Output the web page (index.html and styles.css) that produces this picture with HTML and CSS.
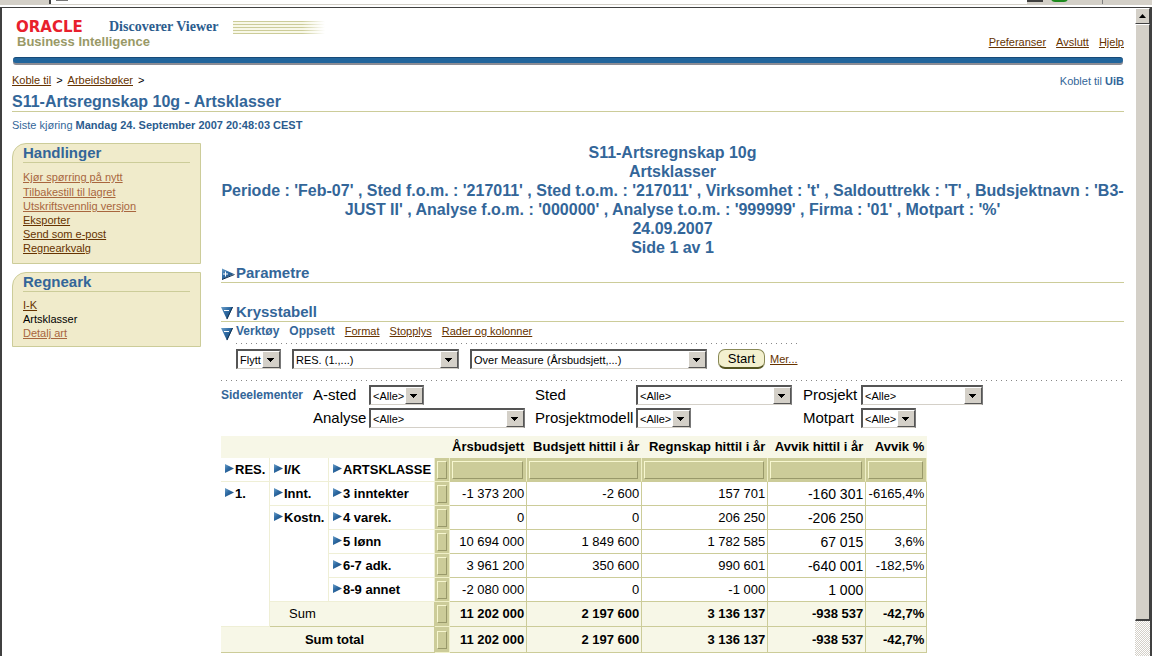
FILE: index.html
```html
<!DOCTYPE html>
<html lang="no">
<head>
<meta charset="utf-8">
<title>Oracle Discoverer Viewer</title>
<link rel="stylesheet" href="styles.css">
</head>
<body>
<svg class="sprite" aria-hidden="true">
  <defs>
    <linearGradient id="blue" x1="0" y1="0" x2="1" y2="1">
      <stop offset="0" stop-color="#6fa0c8"/><stop offset="0.4" stop-color="#2f6ca5"/><stop offset="1" stop-color="#17406c"/>
    </linearGradient>
  </defs>
  <symbol id="drill" viewBox="0 0 9 9"><path d="M0 0 9 4.5 0 9Z" fill="url(#blue)"/></symbol>
  <symbol id="closed" viewBox="0 0 14 12"><path d="M1 0.500 13 6 1 11.500Z" fill="url(#blue)"/><path d="M1 11.500 13.500 6.500" stroke="#12304f"/><path d="M2 6H7M4.500 3.500V8.500" stroke="#fff"/></symbol>
  <symbol id="open" viewBox="0 0 12 14"><path d="M0 1H12L6 13.500Z" fill="url(#blue)"/><path d="M11.500 1 6 13" stroke="#12304f"/><path d="M3 4.500H8" stroke="#fff"/></symbol>
</svg>

<div class="chrome" aria-hidden="true">
  <span class="chrome-tab"></span><span class="chrome-field"><i></i></span><span class="chrome-drop"></span><span class="chrome-go"></span><span class="chrome-end"></span>
</div>

<div class="window">
  <div class="page">
    <header class="masthead">
      <div>
        <div class="brand">
          <span class="logo">ORACLE</span>
          <span class="product">Discoverer Viewer</span>
          <span class="stripes"></span>
        </div>
        <div class="suite">Business Intelligence</div>
      </div>
      <nav class="global"><a href="#">Preferanser</a><a href="#">Avslutt</a><a href="#">Hjelp</a></nav>
    </header>
    <div class="bar"></div>

    <div class="path">
      <nav class="crumbs"><a href="#">Koble til</a><span>&gt;</span><a href="#">Arbeidsbøker</a><span>&gt;</span></nav>
      <div class="connected">Koblet til <b>UiB</b></div>
    </div>
    <h1>S11-Artsregnskap 10g - Artsklasser</h1>
    <p class="last-run">Siste kjøring <b>Mandag 24. September 2007 20:48:03 CEST</b></p>

    <div class="columns">
      <aside>
        <section class="box actions">
          <h2>Handlinger</h2>
          <ul>
            <li><a class="visited" href="#">Kjør spørring på nytt</a></li>
            <li><a class="visited" href="#">Tilbakestill til lagret</a></li>
            <li><a class="visited" href="#">Utskriftsvennlig versjon</a></li>
            <li><a href="#">Eksporter</a></li>
            <li><a href="#">Send som e-post</a></li>
            <li><a href="#">Regnearkvalg</a></li>
          </ul>
        </section>
        <section class="box">
          <h2>Regneark</h2>
          <ul>
            <li><a href="#">I-K</a></li>
            <li>Artsklasser</li>
            <li><a class="visited" href="#">Detalj art</a></li>
          </ul>
        </section>
      </aside>

      <main>
        <div class="report-title">
          <div>S11-Artsregnskap 10g</div>
          <div>Artsklasser</div>
          <div>Periode : 'Feb-07' , Sted f.o.m. : '217011' , Sted t.o.m. : '217011' , Virksomhet : 't' , Saldouttrekk : 'T' , Budsjektnavn : 'B3-JUST II' , Analyse f.o.m. : '000000' , Analyse t.o.m. : '999999' , Firma : '01' , Motpart : '%'</div>
          <div>24.09.2007</div>
          <div>Side 1 av 1</div>
        </div>

        <h2 class="section"><button class="toggle" aria-label="Vis parametre"><svg width="14" height="12"><use href="#closed"/></svg></button>Parametre</h2>
        <h2 class="section second"><button class="toggle" aria-label="Skjul krysstabell"><svg width="12" height="14"><use href="#open"/></svg></button>Krysstabell</h2>

        <div class="tools">
          <div class="tabs">
            <button class="toggle" aria-label="Skjul verktøy"><svg width="12" height="14"><use href="#open"/></svg></button>
            <b>Verktøy</b><b>Oppsett</b><a href="#">Format</a><a href="#">Stopplys</a><a href="#">Rader og kolonner</a>
          </div>
          <div class="layout-row">
            <span class="select w-move"><select aria-label="Handling"><option>Flytt</option></select></span>
            <span class="select w-item"><select aria-label="Element"><option>RES. (1.,...)</option></select></span>
            <span class="select w-target"><select aria-label="Plassering"><option>Over Measure (Årsbudsjett,...)</option></select></span>
            <button class="start">Start</button>
            <a class="more" href="#">Mer...</a>
          </div>
        </div>

        <div class="page-items">
          <b>Sideelementer</b>
          <label for="p1">A-sted</label><span class="select w-s"><select id="p1"><option>&lt;Alle&gt;</option></select></span>
          <label for="p2">Sted</label><span class="select w-l"><select id="p2"><option>&lt;Alle&gt;</option></select></span>
          <label for="p3">Prosjekt</label><span class="select w-m"><select id="p3"><option>&lt;Alle&gt;</option></select></span>
          <label class="row2" for="p4">Analyse</label><span class="select w-l"><select id="p4"><option>&lt;Alle&gt;</option></select></span>
          <label for="p5">Prosjektmodell</label><span class="select w-s"><select id="p5"><option>&lt;Alle&gt;</option></select></span>
          <label for="p6">Motpart</label><span class="select w-s"><select id="p6"><option>&lt;Alle&gt;</option></select></span>
        </div>

        <table class="crosstab">
          <colgroup><col class="c-res"><col class="c-ik"><col class="c-art"><col class="c-grip"><col class="c-n1"><col class="c-n2"><col class="c-n3"><col class="c-n4"><col class="c-n5"></colgroup>
          <thead>
            <tr class="heads"><td colspan="4"></td><th scope="col">Årsbudsjett</th><th scope="col">Budsjett hittil i år</th><th scope="col">Regnskap hittil i år</th><th scope="col">Avvik hittil i år</th><th scope="col">Avvik %</th></tr>
            <tr class="grips">
              <th class="dim"><button class="drill" aria-label="Drill RES."><svg width="9" height="9"><use href="#drill"/></svg></button>RES.</th>
              <th class="dim"><button class="drill" aria-label="Drill I/K"><svg width="9" height="9"><use href="#drill"/></svg></button>I/K</th>
              <th class="dim"><button class="drill" aria-label="Drill ARTSKLASSE"><svg width="9" height="9"><use href="#drill"/></svg></button>ARTSKLASSE</th>
              <td class="grip"><i></i></td><td class="grip wide"><i></i></td><td class="grip wide"><i></i></td><td class="grip wide"><i></i></td><td class="grip wide"><i></i></td><td class="grip wide"><i></i></td>
            </tr>
          </thead>
          <tbody>
            <tr>
              <th class="dim" rowspan="6"><button class="drill" aria-label="Drill 1."><svg width="9" height="9"><use href="#drill"/></svg></button>1.</th>
              <th class="dim"><button class="drill" aria-label="Drill Innt."><svg width="9" height="9"><use href="#drill"/></svg></button>Innt.</th>
              <th class="dim"><button class="drill" aria-label="Drill 3"><svg width="9" height="9"><use href="#drill"/></svg></button>3 inntekter</th>
              <td class="grip"><i></i></td><td>-1 373 200</td><td>-2 600</td><td>157 701</td><td class="big">-160 301</td><td>-6165,4%</td>
            </tr>
            <tr>
              <th class="dim" rowspan="4"><button class="drill" aria-label="Drill Kostn."><svg width="9" height="9"><use href="#drill"/></svg></button>Kostn.</th>
              <th class="dim"><button class="drill" aria-label="Drill 4"><svg width="9" height="9"><use href="#drill"/></svg></button>4 varek.</th>
              <td class="grip"><i></i></td><td>0</td><td>0</td><td>206 250</td><td class="big">-206 250</td><td></td>
            </tr>
            <tr>
              <th class="dim"><button class="drill" aria-label="Drill 5"><svg width="9" height="9"><use href="#drill"/></svg></button>5 lønn</th>
              <td class="grip"><i></i></td><td>10 694 000</td><td>1 849 600</td><td>1 782 585</td><td class="big">67 015</td><td>3,6%</td>
            </tr>
            <tr>
              <th class="dim"><button class="drill" aria-label="Drill 6-7"><svg width="9" height="9"><use href="#drill"/></svg></button>6-7 adk.</th>
              <td class="grip"><i></i></td><td>3 961 200</td><td>350 600</td><td>990 601</td><td class="big">-640 001</td><td>-182,5%</td>
            </tr>
            <tr>
              <th class="dim"><button class="drill" aria-label="Drill 8-9"><svg width="9" height="9"><use href="#drill"/></svg></button>8-9 annet</th>
              <td class="grip"><i></i></td><td>-2 080 000</td><td>0</td><td>-1 000</td><td class="big">1 000</td><td></td>
            </tr>
            <tr class="sum"><th class="sub" colspan="2">Sum</th><td class="grip"><i></i></td><td>11 202 000</td><td>2 197 600</td><td>3 136 137</td><td>-938 537</td><td>-42,7%</td></tr>
            <tr class="sum total"><th colspan="3">Sum total</th><td class="grip"><i></i></td><td>11 202 000</td><td>2 197 600</td><td>3 136 137</td><td>-938 537</td><td>-42,7%</td></tr>
          </tbody>
        </table>
      </main>
    </div>
  </div>
  <div class="scrollbar" aria-hidden="true"><span class="up"><svg width="7" height="4"><path d="M3.500 0 7 4H0Z"/></svg></span><span class="thumb"></span><span class="track"></span></div>
</div>
</body>
</html>
```
FILE: styles.css
```css
* { box-sizing: border-box; }
body {
  margin: 0;
  height: 100vh;
  overflow: hidden;
  display: flex;
  flex-direction: column;
  background: #fff;
  color: #000;
  font: 11px/14px "Liberation Sans", Arial, sans-serif;
}
.sprite { position: absolute; width: 0; height: 0; }
svg { display: block; }
a { color: #663300; }
a.visited { color: #a8663e; }
h1, h2, p, ul { margin: 0; padding: 0; }
ul { list-style: none; }
button { font: inherit; border: 0; padding: 0; background: none; }

/* browser toolbar edge */
.chrome { display: flex; height: 7px; border-bottom: 2px solid #fff; background: #d4d0c8; }
.chrome > span { height: 4px; }
.chrome-tab { width: 49px; }
.chrome-field { flex: 1; background: #fff; border-left: 2px solid #404040; padding-left: 5px; }
.chrome-field i { display: block; width: 12px; height: 1px; background: #777; }
.chrome-drop { width: 16px; border-bottom: 2px solid #404040; margin: -2px 8px 0 0; }
.chrome-go { width: 17px; background: #1d8a1d; border-radius: 0 0 4px 4px; margin: -2px 34px 0 0; }
.chrome-end { width: 50px; border-left: 1px solid #808080; }

.window {
  flex: 1;
  min-height: 0;
  display: grid;
  grid-template-columns: minmax(0, 1fr) 15px;
  border: solid #404040;
  border-width: 1px 2px 0 2px;
}
.page { padding: 12px 11px 0 10px; overflow: hidden; }

.masthead { display: flex; justify-content: space-between; align-items: flex-end; height: 29px; }
.brand { display: flex; align-items: center; height: 16px; padding-left: 4px; }
.logo { width: 93px; color: #e8202c; font: bold 15px/14px "DejaVu Sans", sans-serif; }
.product { color: #2b5c8e; font: bold 14px/14px "Liberation Serif", serif; }
.stripes {
  width: 92px;
  height: 13px;
  margin-left: 14px;
  background: linear-gradient(90deg, transparent 75%, #fff), repeating-linear-gradient(#cccc99 0 1px, #f8f8e8 1px 3px);
}
.suite { padding-left: 5px; color: #999966; font-weight: bold; font-size: 13px; line-height: 14px; }
.global { display: flex; gap: 10px; }
.bar {
  height: 6px;
  margin: 8px 1px 0;
  border-radius: 3px;
  background: #21659c;
  border-top: 1px solid #174a78;
  box-shadow: 0 2px 0 0 #8c8c94;
}
.path { display: flex; justify-content: space-between; padding-top: 10px; height: 29px; }
.crumbs { display: flex; gap: 5px; }
.connected { color: #336699; padding-top: 1px; }
h1 {
  color: #336699;
  font-size: 16px;
  line-height: 19px;
  border-bottom: 1px solid #cccc99;
}
.last-run { padding-top: 6px; color: #336699; }
.last-run b { color: #2b5c8e; }

.columns { display: grid; grid-template-columns: 189px minmax(0, 1fr); gap: 20px; padding-top: 11px; }

aside { display: flex; flex-direction: column; gap: 8px; align-self: start; }
.box {
  background: #f0ebcb;
  border: 1px solid #cccc99;
  border-top-left-radius: 14px;
  padding: 0 10px 6px;
}
.box h2 {
  color: #336699;
  font-size: 15px;
  line-height: 18px;
  border-bottom: 1px solid #cccc99;
  margin-bottom: 6px;
}
.actions { padding-bottom: 8px; }
.actions li:first-child { line-height: 16px; }

.report-title { color: #336699; font-weight: bold; font-size: 16px; line-height: 19px; text-align: center; }
.section {
  display: flex;
  align-items: center;
  margin-top: 7px;
  color: #336699;
  font-size: 15px;
  line-height: 18px;
  border-bottom: 1px solid #cccc99;
}
.section.second { margin-top: 20px; }
.toggle { display: flex; width: 15px; padding-top: 1px; }

.tools { display: grid; justify-items: start; row-gap: 3px; }
.tabs { display: flex; align-items: center; height: 18px; gap: 10px; }
.tabs b { color: #336699; font-size: 12px; }
.tabs .toggle { margin-right: -10px; padding-top: 6px; }
.layout-row {
  display: inline-flex;
  align-items: center;
  gap: 11px;
  margin-left: 15px;
  padding-top: 6px;
  background: repeating-linear-gradient(90deg, #888 0 1px, transparent 1px 5px) top / 100% 1px no-repeat;
}

.select { position: relative; display: inline-block; }
.select select {
  display: block;
  width: 100%;
  height: 20px;
  padding: 0 0 0 2px;
  appearance: none;
  border: 2px solid;
  border-color: #555 #777 #d4d0c8 #555;
  border-bottom-width: 1px;
  border-radius: 0;
  background: #fff;
  color: #000;
  font: inherit;
}
.select::after {
  content: "";
  position: absolute;
  top: 2px;
  right: 1px;
  bottom: 1px;
  width: 16px;
  border: 1px solid;
  border-color: #fff #555 #555 #fff;
  background: conic-gradient(from -45deg at 50% 100%, #000 90deg, transparent 0) center / 7px 4px no-repeat, #d4d0c8;
  pointer-events: none;
}
.w-move { width: 45px; }
.w-item { width: 167px; }
.w-target { width: 237px; }
.w-s { width: 55px; }
.w-m { width: 122px; }
.w-l { width: 156px; }
.start {
  width: 47px;
  height: 20px;
  border: 1px solid #888855;
  border-bottom: 2px solid #555522;
  border-radius: 7px;
  background: #f3f0cf;
  font-size: 13px;
}
.more { margin-left: -6px; }

.page-items {
  display: grid;
  grid-template-columns: 92px 56px 166px 101px 167px 58px auto;
  justify-content: start;
  align-items: center;
  row-gap: 3px;
  margin-top: 11px;
  padding-top: 5px;
  background: repeating-linear-gradient(90deg, #888 0 1px, transparent 1px 5px) top / 100% 1px no-repeat;
}
.page-items b { color: #336699; font-size: 12px; }
.page-items label { font-size: 15px; line-height: 18px; }
.page-items .row2 { grid-column: 2; }

/* down-pointing triangle on the drop-down buttons */
.select::after { background-image: linear-gradient(#000, #000), linear-gradient(#000, #000), linear-gradient(#000, #000), linear-gradient(#000, #000); background-size: 7px 1px, 5px 1px, 3px 1px, 1px 1px; background-position: 4px 6px, 5px 7px, 6px 8px, 7px 9px; background-repeat: no-repeat; }

.crosstab {
  margin-top: 8px;
  border-collapse: separate;
  border-spacing: 0;
  font-size: 13px;
  line-height: 16px;
}
.c-res { width: 49px; } .c-ik { width: 59px; } .c-art { width: 106px; } .c-grip { width: 15px; }
.c-n1 { width: 77px; } .c-n2 { width: 115px; } .c-n3 { width: 126px; } .c-n4 { width: 98px; } .c-n5 { width: 61px; }
.crosstab th, .crosstab td {
  height: 24px;
  padding: 0 2px;
  border: solid #cccc99;
  border-width: 0 1px 1px 0;
  text-align: right;
  white-space: nowrap;
}
.crosstab .heads th, .crosstab .heads td { height: 22px; padding-top: 1px; background: #f7f7e7; border-color: #f7f7e7; }
.crosstab .dim { padding: 4px 0 0 4px; text-align: left; vertical-align: top; border-color: #efefd6; }
.drill { display: inline-block; margin-right: 1px; vertical-align: 1px; }
.crosstab .grip { padding: 2px; background: #cccc99; border-color: #f0f0c8; line-height: 0; }
.crosstab .wide { padding: 2px 3px 2px 2px; border-bottom-color: #cccc99; }
.grip i { display: block; height: 18px; border: 1px solid; border-color: #f7f7d0 #99996a #99996a #f7f7d0; }
.crosstab .big { font-size: 14px; }
.crosstab .sum th, .crosstab .sum td { height: 25px; font-weight: bold; }
.crosstab .sum th, .crosstab .sum td:not(.grip) { background: #f7f7e7; }
.crosstab .sum .sub { padding-left: 19px; text-align: left; font-weight: normal; }
.crosstab .total th, .crosstab .total td { height: 26px; }
.crosstab .total th { text-align: center; padding-left: 16px; }

.scrollbar { display: flex; flex-direction: column; background: #d4d0c8; }
.up {
  display: grid;
  place-items: center;
  height: 16px;
  border: 1px solid;
  border-color: #fff #404040 #404040 #fff;
}
.thumb { flex: 597; border: 1px solid; border-color: #fff #404040 #404040 #fff; border-bottom-width: 2px; }
.track { flex: 35; background: repeating-conic-gradient(#d4d0c8 0 25%, #fff 0 50%) 0 0 / 2px 2px; }
```
